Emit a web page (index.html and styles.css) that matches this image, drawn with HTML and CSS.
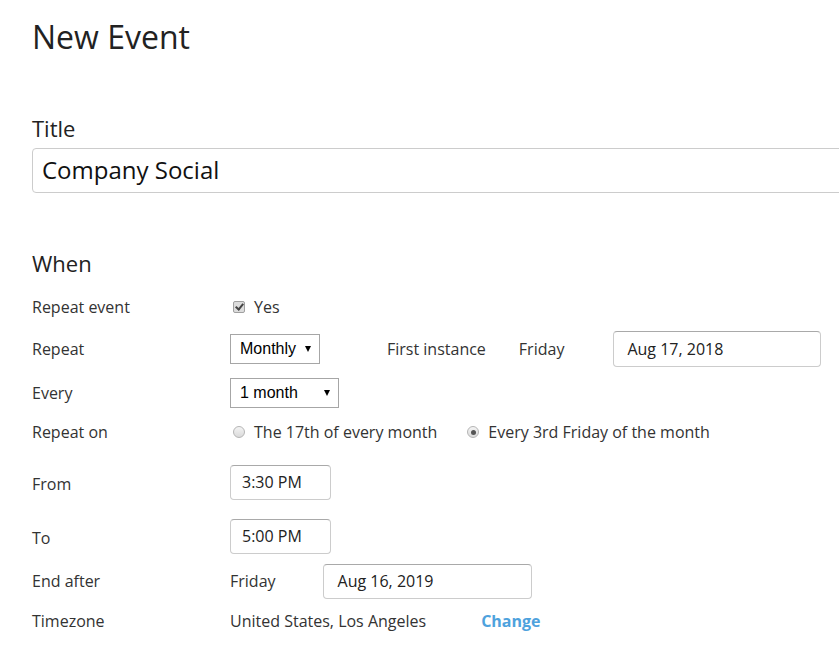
FILE: index.html
```html
<!DOCTYPE html>
<html lang="en">
<head>
  <meta charset="UTF-8">
  <title>New Event</title>
  <link rel="stylesheet" href="styles.css">
</head>
<body>
  <div class="page">
    <h1>New Event</h1>

    <!-- title -->
    <h2 class="title-label">Title</h2>
    <div class="title-input">Company Social</div>

    <!-- when -->
    <h2 class="when-label">When</h2>

    <div class="row row-repeat-event">
      <span class="label">Repeat event</span>
      <span class="checkbox"><span class="tick"></span></span>
      <span>Yes</span>
    </div>

    <div class="row row-repeat">
      <span class="label">Repeat</span>
      <span class="select select-monthly">Monthly <span class="arrow"></span></span>
      <span class="first">First instance</span>
      <span class="day">Friday</span>
      <span class="input input-date">Aug 17, 2018</span>
    </div>

    <div class="row row-every">
      <span class="label">Every</span>
      <span class="select select-month">1 month <span class="arrow"></span></span>
    </div>

    <div class="row row-repeat-on">
      <span class="label">Repeat on</span>
      <span class="radio"></span>
      <span>The 17th of every month</span>
      <span class="radio radio-on"></span>
      <span>Every 3rd Friday of the month</span>
    </div>

    <div class="row row-from">
      <span class="label low">From</span>
      <span class="input input-time">3:30 PM</span>
    </div>

    <div class="row row-to">
      <span class="label low">To</span>
      <span class="input input-time">5:00 PM</span>
    </div>

    <div class="row row-end">
      <span class="label">End after</span>
      <span class="end-day">Friday</span>
      <span class="input input-end">Aug 16, 2019</span>
    </div>

    <div class="row row-tz">
      <span class="label">Timezone</span>
      <span>United States, Los Angeles</span>
      <a class="change" href="#">Change</a>
    </div>
  </div>
</body>
</html>
```

FILE: styles.css
```css
body {
  margin: 0;
  font-family: "Open Sans", "Liberation Sans", sans-serif;
  color: #333;
  background: #fff;
  overflow: hidden;
}

.page {
  padding-left: 32px;
}

h1 {
  margin: 17px 0 0;
  font-size: 32px;
  font-weight: 400;
  line-height: 40px;
  color: #222;
}

h2 {
  font-size: 22px;
  font-weight: 400;
  line-height: 30px;
  margin: 0;
  color: #222;
}
.title-label { margin-top: 56px; }
.when-label { margin-top: 55px; }

.title-input {
  margin-top: 5px;
  width: 820px;
  height: 43px;
  line-height: 42px;
  padding: 0 9px;
  border: 1px solid #ccc;
  border-radius: 4px;
  font-size: 24px;
  color: #111;
}

/* form rows */
.row {
  display: flex;
  align-items: center;
  font-size: 16px;
}
.label {
  width: 198px;
  flex: none;
}
.label.low { padding-top: 4px; }
.row-repeat-event { height: 30px; margin-top: 14px; }
.row-repeat { height: 54px; }
.row-every { height: 34px; }
.row-repeat-on { height: 44px; }
.row-from { height: 56px; }
.row-to { height: 52px; }
.row-end { height: 38px; }
.row-tz { height: 42px; }

/* checkbox + radios */
.checkbox {
  width: 10px;
  height: 10px;
  margin: 0 9px 0 3px;
  border: 1px solid #a0a0a0;
  border-radius: 2px;
  background: #dcdcdc;
  position: relative;
}
.tick {
  position: absolute;
  left: 3px;
  top: 0;
  width: 3px;
  height: 6px;
  border: solid #444;
  border-width: 0 2px 2px 0;
  transform: rotate(40deg);
}
.radio {
  width: 10px;
  height: 10px;
  margin: 0 9px 0 3px;
  border: 1px solid #b5b5b5;
  border-radius: 50%;
  background: linear-gradient(#f4f4f4, #dadada);
  position: relative;
}
.radio-on { margin-left: 30px; }
.radio-on::after {
  content: "";
  position: absolute;
  left: 2.5px;
  top: 2.5px;
  width: 5px;
  height: 5px;
  border-radius: 50%;
  background: #555;
}

/* selects */
.select {
  display: flex;
  align-items: center;
  justify-content: space-between;
  box-sizing: border-box;
  height: 30px;
  padding: 0 8px 0 9px;
  border: 1px solid #a6a6a6;
  font-family: "Liberation Sans", Arial, sans-serif;
  font-size: 16px;
  color: #000;
}
.select-monthly { width: 90px; }
.select-month { width: 109px; }
.arrow {
  width: 0;
  height: 0;
  border-left: 3px solid transparent;
  border-right: 3px solid transparent;
  border-top: 6px solid #000;
}

/* text inputs */
.input {
  display: flex;
  align-items: center;
  box-sizing: border-box;
  height: 35px;
  border: 1px solid #ccc;
  border-top-color: #a9a9a9;
  border-radius: 4px;
  color: #222;
}
.input-date {
  width: 208px;
  height: 36px;
  padding-left: 13px;
}
.input-time {
  width: 101px;
  padding-left: 11px;
}
.input-end {
  width: 209px;
  padding-left: 14px;
}

.first { margin-left: 67px; }
.day { margin-left: 33px; margin-right: 49px; }
.end-day { margin-right: 47px; }

.change {
  margin-left: 55px;
  color: #4ea2dd;
  font-weight: 700;
  text-decoration: none;
}
```
